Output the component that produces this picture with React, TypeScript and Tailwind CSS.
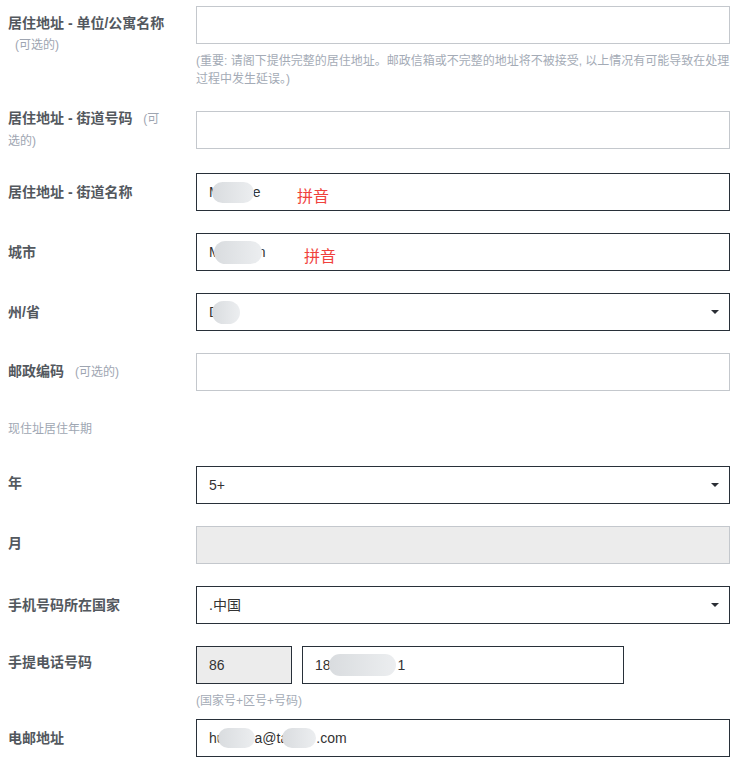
import React from 'react';

const Caret = () => (
  <svg width="8" height="4" viewBox="0 0 8 4" className="shrink-0">
    <polygon points="0,0 8,0 4,4" fill="#2b2f35" />
  </svg>
);

const Blob = ({ className }: { className: string }) => (
  <span className={`inline-block rounded-full bg-gradient-to-r from-[#d9dcdf] to-[#eceef0] blur-[0.6px] ${className}`} />
);

const Optional = () => <span className="pl-[7px] text-[12px] font-normal text-[#9ea5b1]">(可选的)</span>;

const Label = ({ children, className = '' }: { children: React.ReactNode; className?: string }) => (
  <div className={`flex min-h-[38px] items-center pr-[30px] text-[14px] font-bold leading-[21px] text-[#53585e] ${className}`}>
    <div>{children}</div>
  </div>
);

const Box = ({ dark, gray, children }: { dark?: boolean; gray?: boolean; children?: React.ReactNode }) => (
  <div
    className={`relative flex h-[38px] items-center border px-[12px] text-[14px] text-[#333] ${
      dark ? 'border-[#283039]' : 'border-[#c4c8cd]'
    } ${gray ? 'bg-[#ececec]' : 'bg-white'}`}
  >
    {children}
  </div>
);

const Select = ({ children }: { children: React.ReactNode }) => (
  <Box dark>
    <div className="flex flex-1 items-center">{children}</div>
    <span className="-mr-[2px]">
      <Caret />
    </span>
  </Box>
);

const Pinyin = ({ className }: { className: string }) => (
  <span className={`absolute text-[16px] leading-[22px] text-[#f0413c] ${className}`}>拼音</span>
);

export default function App() {
  return (
    <div className="w-[740px] bg-white pl-[8px] pt-[6px] font-['Liberation_Sans','Noto_Sans_CJK_SC',sans-serif]">
      {/* 单位/公寓 */}
      <div className="grid grid-cols-[188px_534px]">
        <div className="pr-[30px] pt-[7px] text-[14px] font-bold leading-[21px] text-[#53585e]">
          居住地址 - 单位/公寓名称 <Optional />
        </div>
        <div>
          <Box />
          <p className="mt-[8px] text-[12px] leading-[18px] text-[#a4abb6]">
            <span className="whitespace-nowrap">
              (重要: 请阁下提供完整的居住地址。邮政信箱或不完整的地址将不被接受, 以上情况有可能导致在处理
            </span>
            <br />
            过程中发生延误。)
          </p>
        </div>
      </div>

      <div className="mt-[20px] grid grid-cols-[188px_534px] items-center">
        <Label>
          居住地址 - 街道号码 <Optional />
        </Label>
        <Box />
      </div>

      <div className="mt-[21px] grid grid-cols-[188px_534px] items-center">
        <Label>居住地址 - 街道名称</Label>
        <Box dark>
          <span>M</span>
          <Blob className="-ml-[9px] h-[21px] w-[42px]" />
          <span className="-ml-[1px]">e</span>
          <Pinyin className="left-[100px] top-[12px]" />
        </Box>
      </div>

      <div className="mt-[22px] grid grid-cols-[188px_534px] items-center">
        <Label>城市</Label>
        <Box dark>
          <span>M</span>
          <Blob className="-ml-[7px] h-[23px] w-[48px]" />
          <span className="-ml-[4px]">n</span>
          <Pinyin className="left-[107px] top-[12px]" />
        </Box>
      </div>

      <div className="mt-[22px] grid grid-cols-[188px_534px] items-center">
        <Label>州/省</Label>
        <Select>
          <span>D</span>
          <Blob className="-ml-[7px] h-[23px] w-[28px]" />
        </Select>
      </div>

      <div className="mt-[22px] grid grid-cols-[188px_534px] items-center">
        <Label>
          邮政编码 <Optional />
        </Label>
        <Box />
      </div>

      <div className="mt-[29px] text-[12px] leading-[18px] text-[#a0a7b3]">现住址居住年期</div>

      <div className="mt-[28px] grid grid-cols-[188px_534px] items-center">
        <Label className="-mt-[3px]">年</Label>
        <Select>
          <span>5+</span>
        </Select>
      </div>

      <div className="mt-[22px] grid grid-cols-[188px_534px] items-center">
        <Label className="-mt-[3px]">月</Label>
        <Box gray />
      </div>

      <div className="mt-[22px] grid grid-cols-[188px_534px] items-center">
        <Label>手机号码所在国家</Label>
        <Select>
          <span>.中国</span>
        </Select>
      </div>

      <div className="mt-[22px] grid grid-cols-[188px_534px]">
        <Label className="-mt-[3px] self-start">手提电话号码</Label>
        <div>
          <div className="flex gap-[10px]">
            <div className="w-[96px]">
              <Box dark gray>
                86
              </Box>
            </div>
            <div className="w-[322px]">
              <Box dark>
                <span>18</span>
                <Blob className="-ml-[2px] h-[22px] w-[67px]" />
                <span className="ml-[2px]">1</span>
              </Box>
            </div>
          </div>
          <p className="mt-[8px] text-[12px] leading-[18px] text-[#a4abb6]">(国家号+区号+号码)</p>
        </div>
      </div>

      <div className="mt-[9px] grid grid-cols-[188px_534px] items-center">
        <Label>电邮地址</Label>
        <Box dark>
          <span>hu</span>
          <Blob className="-ml-[7px] h-[20px] w-[37px]" />
          <span>a@ta</span>
          <Blob className="-ml-[6px] h-[20px] w-[34px]" />
          <span>.com</span>
        </Box>
      </div>
      <div className="h-[5px]" />
    </div>
  );
}
